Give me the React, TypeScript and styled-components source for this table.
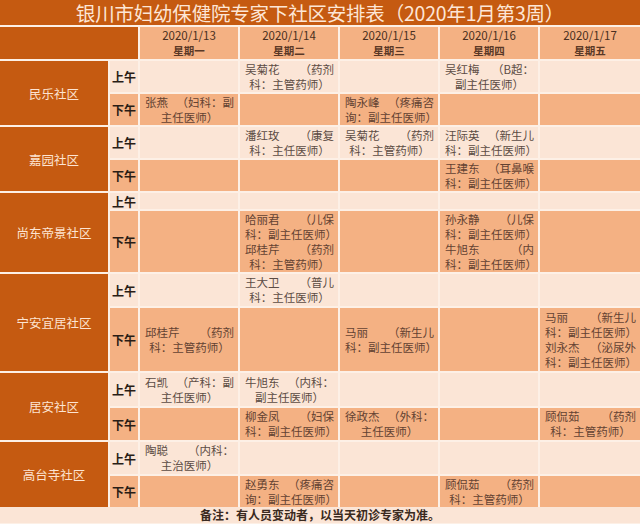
import React from "react";
import styled, { createGlobalStyle } from "styled-components";

const Global = createGlobalStyle`
  html, body { margin: 0; padding: 0; background: #fdf0e6; }
  body { font-family: "Noto Sans CJK SC", "Noto Sans", sans-serif; }
`;

const Page = styled.div`
  width: 640px;
  height: 524px;
  overflow: hidden;
  background: #fdf0e6;
  display: flex;
  flex-direction: column;
`;

const TitleBar = styled.div`
  height: 25px;
  background: #c55a11;
  color: #fde6d6;
  font-size: 19.5px;
  line-height: 25px;
  text-align: center;
  white-space: nowrap;
  letter-spacing: -0.2px;
  margin-bottom: 2px;
`;

const Grid = styled.div`
  display: grid;
  grid-template-columns: 108px 28px 98px 98px 98px 98px 1fr;
  grid-template-rows: 32px 31px 31px 31px 31px 16px 61px 32px 63px 33px 32px 32px 31px;
  gap: 2px;
  background: #fdf0e6;
`;

const Corner = styled.div`
  grid-column: span 2;
  background: #c55a11;
`;

const DateCell = styled.div`
  background: #f4b183;
  display: flex;
  flex-direction: column;
  align-items: center;
  justify-content: center;
  color: #4a2f20;
`;

const DateText = styled.div`
  font-size: 11.5px;
  line-height: 15px;
`;

const WeekText = styled.div`
  font-size: 10.5px;
  line-height: 15px;
  font-weight: 700;
  color: #5a3826;
`;

const Community = styled.div`
  grid-row: span 2;
  background: #c55a11;
  color: #fde4d2;
  font-size: 12.5px;
  display: flex;
  align-items: center;
  justify-content: center;
`;

const Session = styled.div<{ $pm: boolean }>`
  background: ${(p) => (p.$pm ? "#f4b183" : "#fbe5d6")};
  color: #2a1d16;
  font-weight: 700;
  font-size: 12px;
  display: flex;
  align-items: center;
  justify-content: center;
`;

const Cell = styled.div<{ $pm: boolean }>`
  background: ${(p) => (p.$pm ? "#f4b183" : "#fbe5d6")};
  color: ${(p) => (p.$pm ? "#634232" : "#5c4c44")};
  font-size: 11.5px;
  line-height: 15px;
  padding: 0 4px 0 5px;
  display: flex;
  flex-direction: column;
  justify-content: center;
  overflow: hidden;
`;

const FirstLine = styled.div`
  display: flex;
  justify-content: space-between;
  white-space: nowrap;
`;

const SecondLine = styled.div`
  text-align: center;
  white-space: nowrap;
`;

const Footer = styled.div`
  height: 16px;
  font-size: 12px;
  line-height: 16px;
  font-weight: 700;
  color: #3a2a20;
  text-align: center;
  background: #fbe5d6;
`;

type Entry = [string, string, string];
type Slot = Entry[];

interface Row {
  name: string;
  am: Slot[];
  pm: Slot[];
}

const E = (a: string, b: string, c: string): Entry => [a, b, c];
const _: Slot = [];

const rows: Row[] = [
  {
    name: "民乐社区",
    am: [_, [E("吴菊花", "（药剂", "科：主管药师）")], _, [E("吴红梅", "（B超：", "副主任医师）")], _],
    pm: [[E("张燕", "（妇科：副", "主任医师）")], _, [E("陶永峰", "（疼痛咨", "询：副主任医师）")], _, _],
  },
  {
    name: "嘉园社区",
    am: [
      _,
      [E("潘红玫", "（康复", "科：主任医师）")],
      [E("吴菊花", "（药剂", "科：主管药师）")],
      [E("汪际英", "（新生儿", "科：副主任医师）")],
      _,
    ],
    pm: [_, _, _, [E("王建东", "（耳鼻喉", "科：副主任医师）")], _],
  },
  {
    name: "尚东帝景社区",
    am: [_, _, _, _, _],
    pm: [
      _,
      [E("哈丽君", "（儿保", "科：副主任医师）"), E("邱桂芹", "（药剂", "科：主管药师）")],
      _,
      [E("孙永静", "（儿保", "科：副主任医师）"), E("牛旭东", "（内", "科：副主任医师）")],
      _,
    ],
  },
  {
    name: "宁安宜居社区",
    am: [_, [E("王大卫", "（普儿", "科：主任医师）")], _, _, _],
    pm: [
      [E("邱桂芹", "（药剂", "科：主管药师）")],
      _,
      [E("马丽", "（新生儿", "科：副主任医师）")],
      _,
      [E("马丽", "（新生儿", "科：副主任医师）"), E("刘永杰", "（泌尿外", "科：副主任医师）")],
    ],
  },
  {
    name: "居安社区",
    am: [[E("石凯", "（产科：副", "主任医师）")], [E("牛旭东", "（内科：", "副主任医师）")], _, _, _],
    pm: [
      _,
      [E("柳金凤", "（妇保", "科：副主任医师）")],
      [E("徐政杰", "（外科：", "主任医师）")],
      _,
      [E("顾侃茹", "（药剂", "科：主管药师）")],
    ],
  },
  {
    name: "高台寺社区",
    am: [[E("陶聪", "（内科：", "主治医师）")], _, _, _, _],
    pm: [_, [E("赵勇东", "（疼痛咨", "询：副主任医师）")], _, [E("顾侃茹", "（药剂", "科：主管药师）")], _],
  },
];

const dates = [
  ["2020/1/13", "星期一"],
  ["2020/1/14", "星期二"],
  ["2020/1/15", "星期三"],
  ["2020/1/16", "星期四"],
  ["2020/1/17", "星期五"],
];

const SlotCell: React.FC<{ slot: Slot; pm: boolean }> = ({ slot, pm }) => (
  <Cell $pm={pm}>
    {slot.map((e, i) => (
      <React.Fragment key={i}>
        <FirstLine>
          <span>{e[0]}</span>
          <span>{e[1]}</span>
        </FirstLine>
        <SecondLine>{e[2]}</SecondLine>
      </React.Fragment>
    ))}
  </Cell>
);

export default function App() {
  return (
    <Page>
      <Global />
      <TitleBar>银川市妇幼保健院专家下社区安排表（2020年1月第3周）</TitleBar>
      <Grid>
        <Corner />
        {dates.map(([d, w]) => (
          <DateCell key={d}>
            <DateText>{d}</DateText>
            <WeekText>{w}</WeekText>
          </DateCell>
        ))}
        {rows.map((r) => (
          <React.Fragment key={r.name}>
            <Community>{r.name}</Community>
            <Session $pm={false}>上午</Session>
            {r.am.map((s, i) => (
              <SlotCell key={"a" + i} slot={s} pm={false} />
            ))}
            <Session $pm={true}>下午</Session>
            {r.pm.map((s, i) => (
              <SlotCell key={"p" + i} slot={s} pm={true} />
            ))}
          </React.Fragment>
        ))}
      </Grid>
      <Footer>备注：有人员变动者，以当天初诊专家为准。</Footer>
    </Page>
  );
}
